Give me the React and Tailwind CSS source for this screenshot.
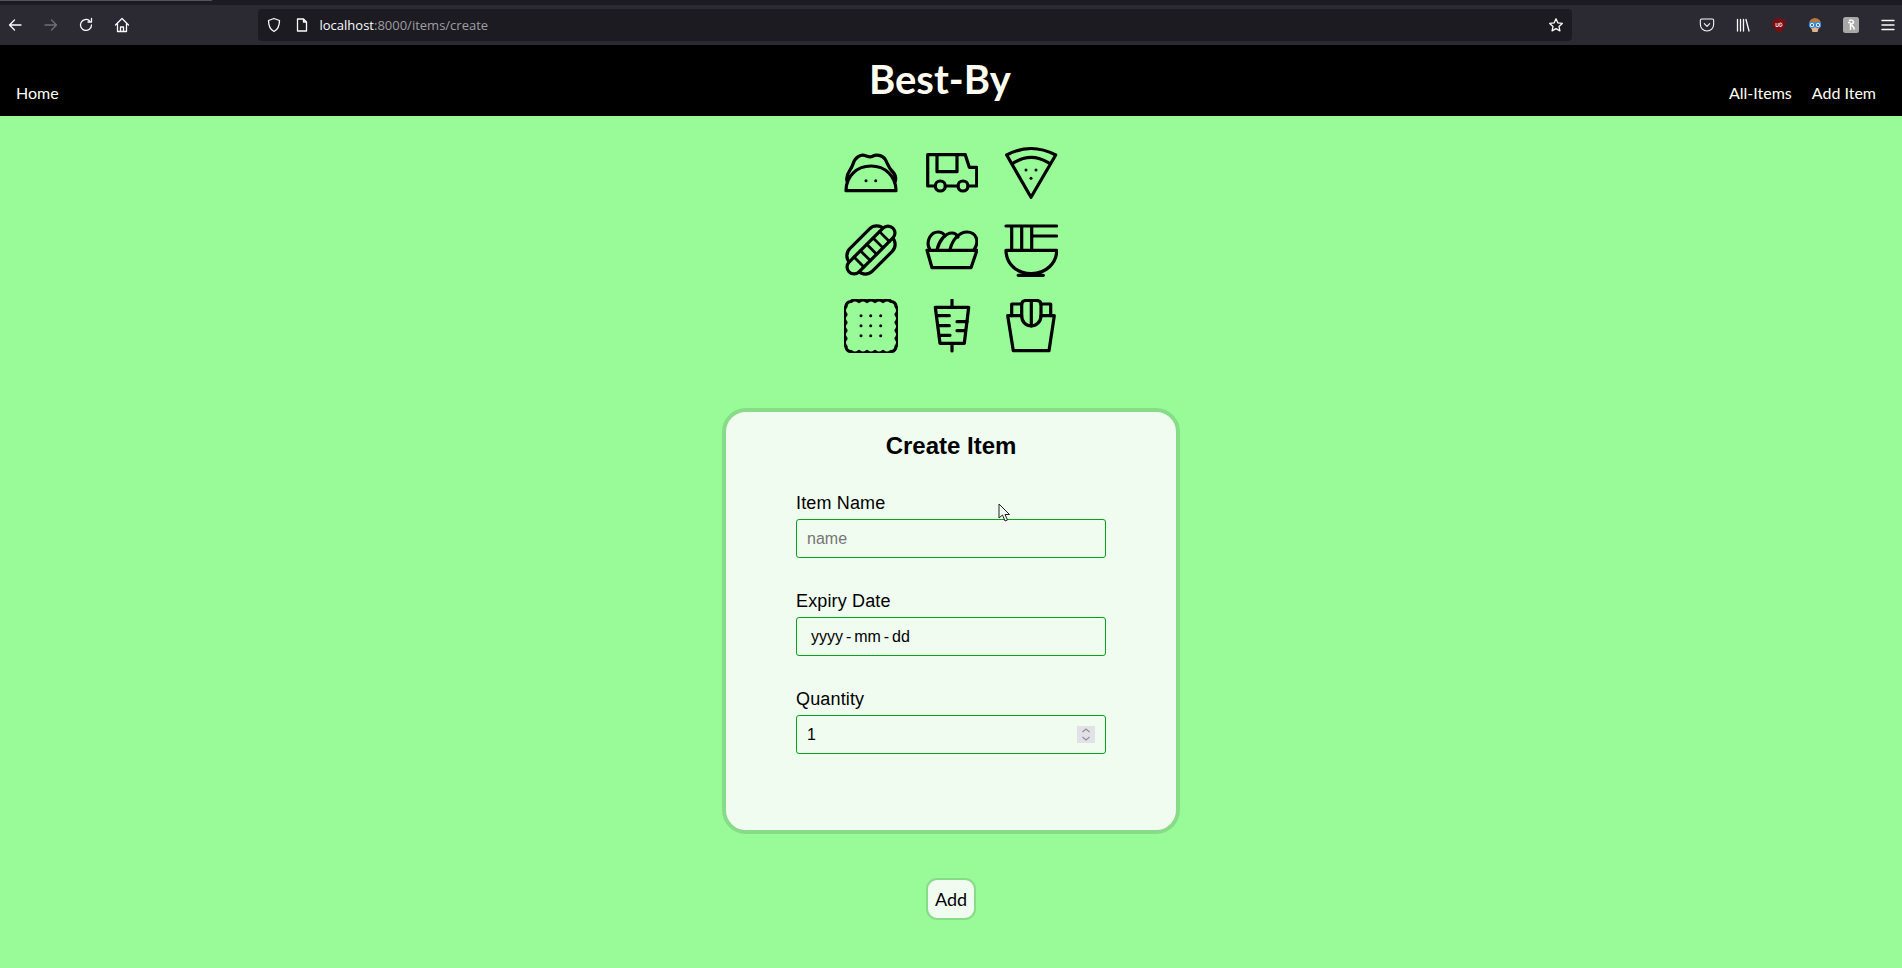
import { Pocket } from 'lucide-react';

const Icon = ({ children }) => (
    <svg viewBox="0 0 54 54" className="w-[54px] h-[54px]" fill="none" stroke="#000" strokeWidth="3.2" strokeLinecap="round" strokeLinejoin="round">
        {children}
    </svg>
);

const Dots = ({ points }) => points.map(([x, y]) => <circle key={`${x}-${y}`} cx={x} cy={y} r="1.5" fill="#000" stroke="none" />);

const foodIcons = [
    // taco
    <Icon key="taco">
        <path d="M3 35C1 28 7 25 9 18C11 11 17 8 21 9.5C24 10.5 26 11.5 28 10.5C32 8.5 38 8.5 41 13C44 18 44 21 48 25C51 28 53 31 51 36" />
        <path d="M2 44.7C2 30 13 20 27 20C41 20 52 30 52 44.7Z" />
        <Dots points={[[22, 34.7], [31.7, 34.7]]} />
    </Icon>,
    // truck
    <Icon key="truck">
        <path d="M11.3 40H3.7V8.7H41.3L45.3 21.3H52.7V40H44M34 40H21.3" />
        <path d="M13 8.7V25.7H33V8.7" />
        <circle cx="16.3" cy="40" r="5" />
        <circle cx="39" cy="40" r="5" />
    </Icon>,
    // pizza
    <Icon key="pizza">
        <path d="M2.7 9Q27 -4 51.7 9L27 51.3Z" />
        <path d="M10 16.7Q27 6 44.3 16.7" />
        <Dots points={[[22, 24], [32, 24], [27, 32.3]]} />
    </Icon>,
    // hot dog
    <Icon key="hotdog">
        <g transform="rotate(-45 27 27)">
            <rect x="3" y="11" width="48" height="32" rx="10" />
            <rect x="-4" y="20" width="62" height="14" rx="7" fill="#98fb98" />
            <path d="M10 20V34M19 20V34M28 20V34M37 20V34M46 20V34" strokeWidth="2.8" />
        </g>
    </Icon>,
    // nuggets
    <Icon key="nuggets">
        <path d="M3 27.3H53L47 44.7H8Z" />
        <path d="M6 27C1 18 7 9 14 9C18 9 20 11 21 13" />
        <path d="M13 27C15 18 21 10 28 10C31 10 33 12 34 14" />
        <path d="M26 27C28 17 35 9 43 9C52 9 56 18 50 27" />
    </Icon>,
    // noodles
    <Icon key="noodles">
        <path d="M2 3H52.7M27.7 13H52.7M7.7 3V27M17.7 3V27M27.7 3V27" />
        <path d="M2 27.3H52.7C52.7 40 42 50.7 27.3 50.7C12 50.7 2 40 2 27.3Z" />
        <path d="M14.3 52.3H39.3" />
    </Icon>,
    // cracker
    <Icon key="cracker">
        <path d="M7 2.5q4 -3.4 8 0q4 -3.4 8 0q4 -3.4 8 0q4 -3.4 8 0q4 -3.4 8 0a5 5 0 0 1 5 5q3.4 4 0 8q3.4 4 0 8q3.4 4 0 8q3.4 4 0 8q3.4 4 0 8a5 5 0 0 1 -5 5q-4 3.4 -8 0q-4 3.4 -8 0q-4 3.4 -8 0q-4 3.4 -8 0q-4 3.4 -8 0a5 5 0 0 1 -5 -5q-3.4 -4 0 -8q-3.4 -4 0 -8q-3.4 -4 0 -8q-3.4 -4 0 -8q-3.4 -4 0 -8a5 5 0 0 1 5 -5Z" />
        <Dots points={[[17, 16.7], [26.7, 16.7], [36.7, 16.7], [17, 26.7], [26.7, 26.7], [36.7, 26.7], [17, 36.7], [26.7, 36.7], [36.7, 36.7]]} />
    </Icon>,
    // doner
    <Icon key="doner">
        <path d="M11.3 8.3H44.7L40.3 44.3H16Z" />
        <path d="M28 1V8.3M28 44.3V52" />
        <path d="M13 16.7H25.3M33 22.7H43M15 26.7H25.3M33 31.7H41.3M17 36.3H26" />
    </Icon>,
    // fries
    <Icon key="fries">
        <path d="M3.7 16.7H17.7C17.7 23 22 27 27.3 27C32 27 37 23 37 16.7H50.3L45 51.7H9.3Z" />
        <path d="M17.7 17V6Q17.7 1.5 22 1.5H32.5Q37 1.5 37 6V17" />
        <path d="M27.3 1.5V27" />
        <path d="M7.7 16.7V5H17.7M37 5H46.7V16.7" />
    </Icon>,
];

const Stroke = ({ children, className = '' }) => (
    <svg viewBox="0 0 16 16" className={`w-4 h-4 ${className}`} fill="none" stroke="currentColor" strokeWidth="1.3" strokeLinecap="round" strokeLinejoin="round">
        {children}
    </svg>
);

const BrowserBar = () => (
    <div className="font-['Open_Sans',sans-serif]">
        <div className="h-[5px] bg-[#1c1b22]">
            <div className="h-px w-[212px] bg-[#55545c]" />
        </div>
        <div className="h-10 bg-[#2b2a33] flex items-center text-[#fbfbfe]">
            <div className="flex items-center gap-[19.5px] pl-[7px]">
                <Stroke><path d="M14 8H2.5M7.5 3L2.5 8L7.5 13" /></Stroke>
                <Stroke className="text-[#6f6e75]"><path d="M2 8H13.5M8.5 3L13.5 8L8.5 13" /></Stroke>
                <Stroke><path d="M13.5 8A5.5 5.5 0 1 1 11.5 3.7M13.5 1.5V5H10" /></Stroke>
                <Stroke><path d="M1.5 8L8 1.5L14.5 8M3.5 7V14.5H12.5V7M6.5 14.5V10H9.5V14.5" /></Stroke>
            </div>
            <div className="ml-[128px] w-[1314px] h-8 rounded bg-[#1c1b22] flex items-center pl-2 pr-2">
                <Stroke><path d="M8 1.5L13.5 3.5C13.5 9 12 12.5 8 14.5C4 12.5 2.5 9 2.5 3.5Z" /></Stroke>
                <Stroke className="ml-3"><path d="M3.5 2H9.5L12.5 5V14H3.5ZM9.5 2V5H12.5" /></Stroke>
                <div className="ml-[10px] mt-[2px] text-[13px] text-[#fbfbfe]">localhost<span className="text-[#9e9ea3]">:8000/items/create</span></div>
                <Stroke className="ml-auto"><path d="M8 1.8L9.9 5.9L14.3 6.4L11 9.4L11.9 13.9L8 11.6L4.1 13.9L5 9.4L1.7 6.4L6.1 5.9Z" /></Stroke>
            </div>
            <div className="flex items-center ml-[127px] gap-[20px]">
                <Pocket size={16} strokeWidth={1.6} />
                <Stroke><path d="M2.5 2.5V14M5.5 2.5V14M8.5 2.5V14M11 2.5L14 14" /></Stroke>
                <svg viewBox="0 0 16 16" className="w-4 h-4">
                    <path d="M8 1L14.5 3C14.5 9 13 13 8 15.5C3 13 1.5 9 1.5 3Z" fill="#7a0c12" />
                    <path d="M5 6V9.5H7.2V6M8.8 6V9.5H10C11.4 9.5 11.4 6 10 6Z" fill="none" stroke="#f2dada" strokeWidth="1" />
                </svg>
                <svg viewBox="0 0 16 16" className="w-4 h-4">
                    <circle cx="8" cy="7" r="6" fill="#b5793f" />
                    <path d="M4 10H12L10.5 15H5.5Z" fill="#e3b38c" />
                    <circle cx="5" cy="8" r="2.6" fill="#fff" stroke="#2e8ce6" strokeWidth="1.2" />
                    <circle cx="11" cy="8" r="2.6" fill="#fff" stroke="#2e8ce6" strokeWidth="1.2" />
                    <circle cx="5" cy="8" r="1" fill="#2b3a55" />
                    <circle cx="11" cy="8" r="1" fill="#2b3a55" />
                </svg>
                <svg viewBox="0 0 16 16" className="w-4 h-4">
                    <rect width="16" height="16" rx="2.5" fill="#a8a8a8" />
                    <path d="M6 3.5C8 2.5 10.5 3 10.5 5C10.5 6.5 9 7 7.5 7V13M7.5 8C9.5 8 10.5 10 11.5 12.5M5 5.5H7.5" fill="none" stroke="#fff" strokeWidth="1.5" />
                </svg>
                <svg viewBox="0 0 16 16" className="w-4 h-4 ml-[1px]" stroke="currentColor" strokeWidth="1.4" strokeLinecap="round">
                    <path d="M2 3.5H14M2 8H14M2 12.5H14" />
                </svg>
            </div>
        </div>
    </div>
);

const NavBar = () => (
    <nav className="h-[71px] bg-black text-[#fffdf0] flex justify-between items-end pb-[13px] pl-4 pr-[26px] font-['Lato',sans-serif]">
        <a className="text-[16px] leading-5">Home</a>
        <h1 className="ml-[92px] text-[40px] font-bold leading-[44px] mb-[2px]">Best-By</h1>
        <div className="flex gap-5 text-[16px] leading-5">
            <a>All-Items</a>
            <a>Add Item</a>
        </div>
    </nav>
);

const Field = ({ label, children }) => (
    <div className="mb-[33px] last:mb-0">
        <label className="block text-[18px] leading-5 mb-[6px] text-black tracking-[0.15px]">{label}</label>
        {children}
    </div>
);

const inputBox = 'w-[310px] h-[39px] border border-[#00a51a] rounded-[3px] bg-[#f0fcf0] text-[16px] text-black outline-none';

export default function App() {
    return (
        <div className="h-[968px] overflow-hidden bg-[#98fb98] font-['Liberation_Sans',Arial,sans-serif] relative">
            <BrowserBar />
            <NavBar />
            <main className="flex flex-col items-center pt-[30px]">
                <div className="grid grid-cols-3 gap-x-[26px] gap-y-[22.5px]">
                    {foodIcons}
                </div>
                <form className="mt-[55px] flex flex-col items-center">
                    <div className="w-[458px] h-[426px] border-4 border-[#88dc88] rounded-[24px] bg-[#f0fcf0] pt-5">
                        <h2 className="text-[24px] leading-7 font-bold text-center text-black">Create Item</h2>
                        <div className="mt-[33px] w-[310px] mx-auto">
                            <Field label="Item Name">
                                <input className={`${inputBox} px-[10px] placeholder:text-[#757575]`} placeholder="name" />
                            </Field>
                            <Field label="Expiry Date">
                                <input className={`${inputBox} px-[14px] [word-spacing:-1.5px]`} readOnly value="yyyy - mm - dd" />
                            </Field>
                            <Field label="Quantity">
                                <div className={`${inputBox} flex items-center pl-[10px] pr-[10px]`}>
                                    <input className="flex-1 min-w-0 outline-none bg-transparent" readOnly value="1" />
                                    <div className="w-[18px] h-[17px] bg-[#e1e1e6] flex items-center justify-center">
                                        <svg viewBox="0 0 18 17" className="w-[18px] h-[17px]" fill="none" stroke="#8f8f9d" strokeWidth="1.2">
                                            <path d="M5.5 6L9 3L12.5 6M5.5 11L9 14L12.5 11" />
                                        </svg>
                                    </div>
                                </div>
                            </Field>
                        </div>
                    </div>
                    <button type="button" className="mt-11 w-[50px] h-[42px] rounded-[11px] border-2 border-[#88dc88] bg-[#f0fcf0] text-[18px] text-black font-['Lato',sans-serif]">
                        Add
                    </button>
                </form>
            </main>
            {/* mouse pointer caught in the screenshot */}
            <svg viewBox="0 0 13 20" className="absolute left-[998px] top-[503px] w-[13px] h-5" fill="#f0fcf0" stroke="#222" strokeWidth="1">
                <path d="M1 1V15L4.5 12L7 18L9.5 17L7 11.5H11.5Z" />
            </svg>
        </div>
    );
}
